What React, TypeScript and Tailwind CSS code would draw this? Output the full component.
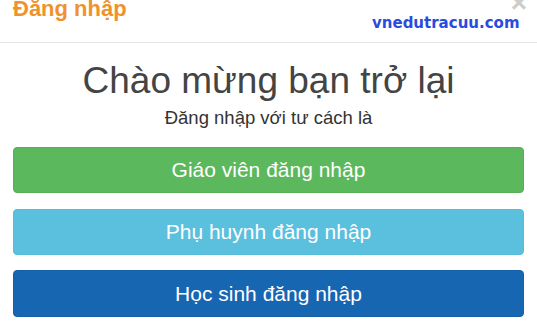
import React from "react";

export default function App() {
  return (
    <div className="w-[537px] h-[329px] bg-white overflow-hidden" style={{ fontFamily: '"Liberation Sans", Arial, sans-serif' }}>
      <div className="relative h-[43px] border-b border-[#e5e5e5]">
        <div className="absolute left-[13px] top-[-4px] text-[22px] font-bold text-[#f0922b] leading-[26px]">Đăng nhập</div>
        <div className="absolute right-[10px] top-[-11px] text-[28px] font-bold text-[#cccccc] leading-[28px]">×</div>
        <div
          className="absolute left-[372px] top-[14px] text-[15px] font-bold text-[#2a4be0] leading-[18px]"
          style={{ fontFamily: '"DejaVu Sans", Verdana, sans-serif' }}
        >
          vnedutracuu.com
        </div>
      </div>
      <div className="flex flex-col items-center pt-[16px]">
        <div className="text-[37px] leading-[44px] text-[#444444]">Chào mừng bạn trở lại</div>
        <div className="text-[18.5px] leading-[20px] text-[#333333] mt-[5px]">Đăng nhập với tư cách là</div>
      </div>
      <div className="flex flex-col px-[13px] pt-[19px]">
        <button className="h-[46px] rounded-[4px] bg-[#5cb85c] text-white text-[21px] border border-[#55b055]">Giáo viên đăng nhập</button>
        <button className="h-[46px] mt-[16px] rounded-[4px] bg-[#5bc0de] text-white text-[21px] border border-[#56bcdb]">Phụ huynh đăng nhập</button>
        <button className="h-[47px] mt-[15px] rounded-[4px] bg-[#1766b2] text-white text-[21px] border border-[#1560a8]">Học sinh đăng nhập</button>
      </div>
    </div>
  );
}
